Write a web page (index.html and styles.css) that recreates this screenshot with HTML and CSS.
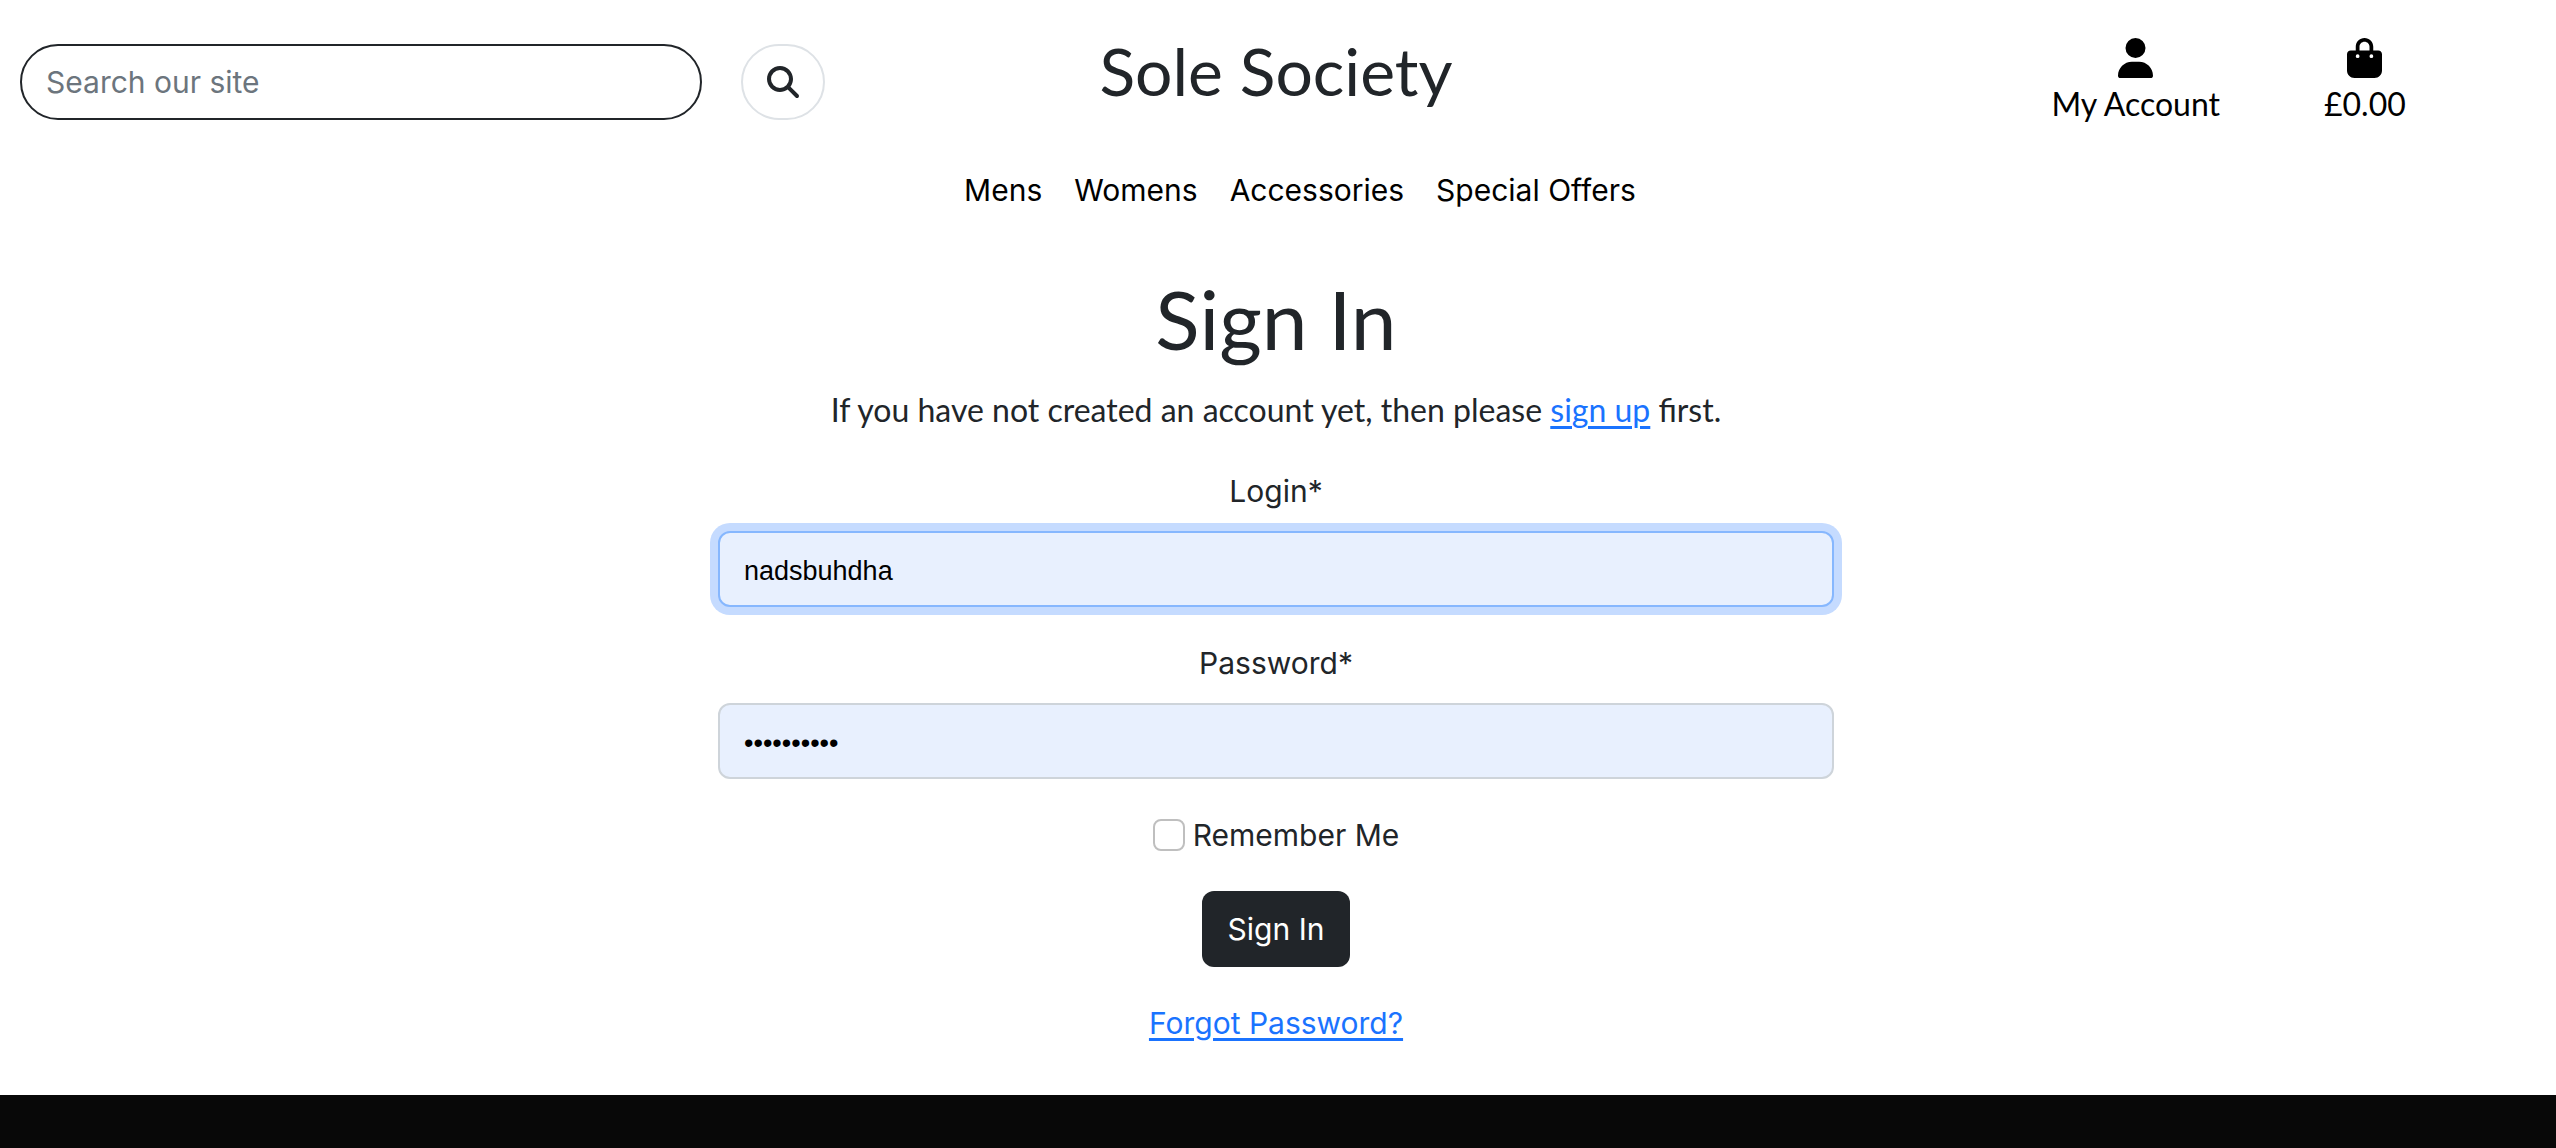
FILE: index.html
```html
<!DOCTYPE html>
<html lang="en">
<head>
  <meta charset="utf-8">
  <meta name="viewport" content="width=device-width, initial-scale=1">
  <title>Sole Society - Sign In</title>
  <link rel="stylesheet" href="styles.css">
</head>
<body>
  <header class="site-header">
    <div class="header-row">
      <form class="search" role="search">
        <input class="search-input" type="search" name="q" placeholder="Search our site" aria-label="Search our site">
        <button class="search-button" type="submit" aria-label="Search">
          <svg class="search-icon" viewBox="0 0 512 512" aria-hidden="true"><path d="M416 208c0 45.9-14.9 88.3-40 122.7L502.6 457.4c12.5 12.5 12.5 32.8 0 45.3s-32.8 12.5-45.3 0L330.7 376c-34.4 25.2-76.8 40-122.7 40C93.1 416 0 322.9 0 208S93.1 0 208 0S416 93.1 416 208zM208 352a144 144 0 1 0 0-288 144 144 0 1 0 0 288z"/></svg>
        </button>
      </form>
      <a class="brand" href="#">Sole Society</a>
      <div class="header-links">
        <a class="header-link" href="#">
          <svg class="header-icon" viewBox="0 0 448 512" aria-hidden="true"><path d="M224 256A128 128 0 1 0 224 0a128 128 0 1 0 0 256zm-45.7 48C79.8 304 0 383.8 0 482.3C0 498.7 13.3 512 29.7 512H418.3c16.4 0 29.7-13.3 29.7-29.7C448 383.8 368.2 304 269.7 304H178.3z"/></svg>
          <span>My Account</span>
        </a>
        <a class="header-link" href="#">
          <svg class="header-icon" viewBox="0 0 448 512" aria-hidden="true"><path d="M160 112c0-35.3 28.7-64 64-64s64 28.7 64 64v48H160V112zm-48 48H48c-26.5 0-48 21.5-48 48V416c0 53 43 96 96 96H352c53 0 96-43 96-96V208c0-26.5-21.5-48-48-48H336V112C336 50.1 285.9 0 224 0S112 50.1 112 112v48zm24 48a24 24 0 1 1 0 48 24 24 0 1 1 0-48zm152 24a24 24 0 1 1 48 0 24 24 0 1 1 -48 0z"/></svg>
          <span>£0.00</span>
        </a>
      </div>
    </div>
    <nav class="main-nav" aria-label="Main">
      <a href="#">Mens</a>
      <a href="#">Womens</a>
      <a href="#">Accessories</a>
      <a href="#">Special Offers</a>
    </nav>
  </header>

  <main class="sign-in">
    <h1 class="title">Sign In</h1>
    <p class="intro">If you have not created an account yet, then please <a href="#">sign up</a> first.</p>
    <form class="sign-in-form">
      <div class="field">
        <label for="login">Login*</label>
        <input class="field-input is-active" id="login" name="login" type="text" value="nadsbuhdha" required>
      </div>
      <div class="field">
        <label for="password">Password*</label>
        <input class="field-input" id="password" name="password" type="password" value="password12" required>
      </div>
      <div class="remember">
        <input class="checkbox" id="remember" name="remember" type="checkbox">
        <label for="remember">Remember Me</label>
      </div>
      <button class="submit" type="submit">Sign In</button>
      <a class="forgot" href="#">Forgot Password?</a>
    </form>
  </main>

  <footer class="site-footer"></footer>
</body>
</html>
```
FILE: styles.css
```css
* {
  box-sizing: border-box;
}

body {
  display: flex;
  flex-direction: column;
  min-height: 100vh;
  margin: 0;
  background: #fff;
  color: #212529;
  font-family: Inter, "Liberation Sans", sans-serif;
  font-size: 30px;
  line-height: 48px;
}

input,
button {
  margin: 0;
  font: inherit;
}

a {
  color: #1a73ff;
  text-decoration-thickness: 3px;
  text-underline-offset: 4px;
}

/* Header */
.header-row {
  display: grid;
  grid-template-columns: repeat(3, 1fr);
  padding: 31px 4px 0 0;
}

.search {
  display: flex;
  gap: 39px;
  align-items: flex-start;
  padding: 13px 26px 0 20px;
}

.search-input {
  flex: 1;
  min-width: 0;
  height: 76px;
  padding: 0 24px;
  border: 2px solid #212529;
  border-radius: 38px;
  background: #fff;
  color: #212529;
  appearance: none;
}

.search-input::placeholder {
  color: #6c757d;
  opacity: 1;
}

.search-button {
  display: flex;
  align-items: center;
  justify-content: center;
  width: 84px;
  height: 76px;
  padding: 0;
  border: 2px solid #dee2e6;
  border-radius: 38px;
  background: #fff;
}

.search-icon {
  width: 32px;
  height: 32px;
  fill: #212529;
}

.brand {
  justify-self: center;
  color: #212529;
  font-family: Lato, sans-serif;
  font-size: 66px;
  line-height: 80px;
  text-decoration: none;
}

.header-links {
  display: flex;
  gap: 104px;
  justify-content: center;
  padding: 7px 0 0 204px;
  font-family: Lato, sans-serif;
  font-size: 32px;
}

.header-link {
  display: flex;
  flex-direction: column;
  align-items: center;
  gap: 2px;
  color: #000;
  text-decoration: none;
}

.header-icon {
  width: 35px;
  height: 40px;
  fill: #000;
}

.main-nav {
  display: flex;
  gap: 32px;
  justify-content: center;
  padding: 38px 0 0 44px;
}

.main-nav a {
  color: #000;
  text-decoration: none;
}

/* Sign in */
.sign-in {
  display: flex;
  flex-direction: column;
  align-items: center;
  padding: 56px 4px 48px 0;
}

.title {
  margin: 0 0 20px;
  font-family: Lato, sans-serif;
  font-size: 82px;
  font-weight: 400;
  line-height: 96px;
}

.intro {
  margin: 0;
  font-family: Lato, sans-serif;
  font-size: 32px;
}

.sign-in-form {
  display: flex;
  flex-direction: column;
  align-items: center;
  width: calc(50% - 160px);
  min-width: 320px;
  padding-top: 33px;
}

.field {
  display: flex;
  flex-direction: column;
  gap: 16px;
  width: 100%;
  margin-bottom: 32px;
  text-align: center;
}

.field-input {
  width: 100%;
  height: 76px;
  padding: 4px 24px 0;
  border: 2px solid #ced4da;
  border-radius: 12px;
  outline: 0;
  background: #e8f0fe;
  color: #000;
  font-family: "Liberation Sans", sans-serif;
  font-size: 27px;
}

.field-input.is-active {
  border-color: #86b7fe;
  box-shadow: 0 0 0 8px #c5dbff;
}

.remember {
  display: flex;
  gap: 8px;
  align-items: center;
  margin-bottom: 32px;
}

.checkbox {
  width: 32px;
  height: 32px;
  border: 2px solid #bfbfbf;
  border-radius: 8px;
  background: #fff;
  appearance: none;
}

.submit {
  height: 76px;
  margin-bottom: 32px;
  padding: 0 26px;
  border: 0;
  border-radius: 12px;
  background: #212529;
  color: #fff;
}

/* Footer */
.site-footer {
  flex: 1;
  min-height: 52px;
  background: #080808;
}
```
